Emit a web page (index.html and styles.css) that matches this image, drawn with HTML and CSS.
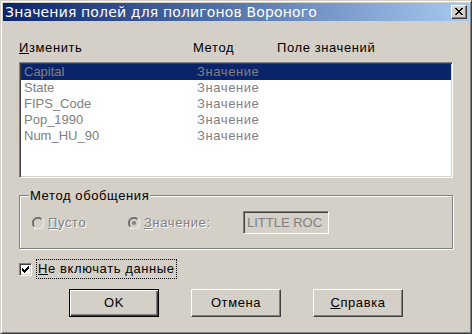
FILE: index.html
```html
<!DOCTYPE html>
<html>
<head>
<meta charset="utf-8">
<link rel="stylesheet" href="styles.css">
</head>
<body>
<div class="window">
  <div class="titlebar">
    <span class="title">Значения полей для полигонов Вороного</span>
    <span class="close">
      <svg width="8" height="7" viewBox="0 0 8 7" shape-rendering="crispEdges">
        <g fill="#000">
          <rect x="0" y="0" width="2" height="1"/><rect x="6" y="0" width="2" height="1"/>
          <rect x="1" y="1" width="2" height="1"/><rect x="5" y="1" width="2" height="1"/>
          <rect x="2" y="2" width="4" height="1"/>
          <rect x="3" y="3" width="2" height="1"/>
          <rect x="2" y="4" width="4" height="1"/>
          <rect x="1" y="5" width="2" height="1"/><rect x="5" y="5" width="2" height="1"/>
          <rect x="0" y="6" width="2" height="1"/><rect x="6" y="6" width="2" height="1"/>
        </g>
      </svg>
    </span>
  </div>
  <div class="content">
    <div class="header">
      <span class="hc1"><u>И</u>зменить</span>
      <span class="hc2">Метод</span>
      <span class="hc3">Поле значений</span>
    </div>
    <div class="list">
      <div class="row selected"><span class="lc1">Capital</span><span>Значение</span></div>
      <div class="row"><span class="lc1">State</span><span>Значение</span></div>
      <div class="row"><span class="lc1">FIPS_Code</span><span>Значение</span></div>
      <div class="row"><span class="lc1">Pop_1990</span><span>Значение</span></div>
      <div class="row"><span class="lc1">Num_HU_90</span><span>Значение</span></div>
    </div>
    <div class="group">
      <span class="legend">Метод обобщения</span>
      <div class="radio-row">
        <span class="radio r1">
          <svg class="circle" width="12" height="12" viewBox="0 0 12 12">
            <circle cx="6" cy="6" r="5.5" fill="#d4d0c8"/>
            <path d="M1.8 10.2 A5.5 5.5 0 0 1 10.2 1.8" fill="none" stroke="#808080" stroke-width="1"/>
            <path d="M10.2 1.8 A5.5 5.5 0 0 1 1.8 10.2" fill="none" stroke="#ffffff" stroke-width="1"/>
            <path d="M2.5 9.5 A4.5 4.5 0 0 1 9.5 2.5" fill="none" stroke="#404040" stroke-width="1"/>
            <path d="M9.5 2.5 A4.5 4.5 0 0 1 2.5 9.5" fill="none" stroke="#d4d0c8" stroke-width="1"/>
          </svg>
          <span class="dis"><u>П</u>усто</span>
        </span>
        <span class="radio r2">
          <svg class="circle" width="12" height="12" viewBox="0 0 12 12">
            <circle cx="6" cy="6" r="5.5" fill="#d4d0c8"/>
            <path d="M1.8 10.2 A5.5 5.5 0 0 1 10.2 1.8" fill="none" stroke="#808080" stroke-width="1"/>
            <path d="M10.2 1.8 A5.5 5.5 0 0 1 1.8 10.2" fill="none" stroke="#ffffff" stroke-width="1"/>
            <path d="M2.5 9.5 A4.5 4.5 0 0 1 9.5 2.5" fill="none" stroke="#404040" stroke-width="1"/>
            <path d="M9.5 2.5 A4.5 4.5 0 0 1 2.5 9.5" fill="none" stroke="#d4d0c8" stroke-width="1"/>
            <circle cx="6" cy="6" r="2" fill="#808080"/>
          </svg>
          <span class="dis"><u>З</u>начение:</span>
        </span>
        <span class="textbox">LITTLE ROC</span>
      </div>
    </div>
    <div class="check-row">
      <span class="checkbox">
        <svg width="7" height="7" viewBox="0 0 7 7" shape-rendering="crispEdges">
          <g fill="#000">
            <rect x="6" y="0" width="1" height="1"/>
            <rect x="5" y="1" width="2" height="1"/>
            <rect x="0" y="2" width="1" height="1"/><rect x="4" y="2" width="3" height="1"/>
            <rect x="0" y="3" width="2" height="1"/><rect x="3" y="3" width="3" height="1"/>
            <rect x="0" y="4" width="5" height="1"/>
            <rect x="1" y="5" width="3" height="1"/>
            <rect x="2" y="6" width="1" height="1"/>
          </g>
        </svg>
      </span>
      <span class="focus"><u>Н</u>е включать данные</span>
    </div>
    <div class="buttons">
      <span class="btn default">OK</span>
      <span class="btn">Отмена</span>
      <span class="btn"><u>С</u>правка</span>
    </div>
  </div>
</div>
</body>
</html>
```
FILE: styles.css
```css
html, body {
  margin: 0;
  padding: 0;
  background: #d4d0c8;
}

.window {
  width: 472px;
  height: 334px;
  box-sizing: border-box;
  background: #d4d0c8;
  border: 1px solid;
  border-color: #d4d0c8 #404040 #404040 #d4d0c8;
  box-shadow: inset 1px 1px 0 #ffffff, inset -1px -1px 0 #808080;
  padding: 2px;
  display: flex;
  flex-direction: column;
}

.titlebar {
  height: 18px;
  flex: none;
  background: linear-gradient(to right, #0a246a, #a6caf0);
  display: flex;
  align-items: center;
  justify-content: space-between;
  padding: 0 2px;
}

.title {
  color: #ffffff;
  font-family: "DejaVu Sans", sans-serif;
  font-size: 14px;
  line-height: 18px;
  letter-spacing: 0.15px;
  white-space: nowrap;
}

.close {
  width: 16px;
  height: 14px;
  box-sizing: border-box;
  background: #d4d0c8;
  border: 1px solid;
  border-color: #ffffff #404040 #404040 #ffffff;
  box-shadow: inset -1px -1px 0 #808080;
  display: flex;
  align-items: center;
  justify-content: center;
  padding: 0 1px 1px 0;
}

.close svg {
  display: block;
}

.content {
  padding: 19px 16px 0;
  font-family: "Liberation Sans", Arial, sans-serif;
  font-size: 13px;
  line-height: 16px;
  letter-spacing: 0.6px;
  color: #000000;
}

.header {
  display: flex;
  height: 16px;
  white-space: nowrap;
}

.hc1 {
  width: 174px;
}

.hc2 {
  width: 84px;
}

.list {
  margin-top: 6px;
  height: 116px;
  box-sizing: border-box;
  background: #ffffff;
  border: 1px solid;
  border-color: #808080 #ffffff #ffffff #808080;
  box-shadow: inset 1px 1px 0 #404040, inset -1px -1px 0 #d4d0c8;
  padding: 1px;
}

.row {
  display: flex;
  height: 16px;
  padding-left: 3px;
  color: #808080;
  white-space: nowrap;
}

.row.selected {
  background: #0a246a;
}

.lc1 {
  width: 173px;
  letter-spacing: 0;
}

.group {
  position: relative;
  margin-top: 17px;
  height: 54px;
  box-sizing: border-box;
  border: 1px solid #808080;
  box-shadow: inset 1px 1px 0 #ffffff, 1px 1px 0 #ffffff;
  padding: 15px 0 0 12px;
}

.legend {
  position: absolute;
  top: -8px;
  left: 9px;
  padding: 0 1px;
  background: #d4d0c8;
  color: #000000;
  white-space: nowrap;
}

.radio-row {
  display: flex;
  align-items: center;
  height: 23px;
}

.radio {
  display: flex;
  align-items: center;
  gap: 4px;
  white-space: nowrap;
}

.r1 {
  width: 96px;
}

.r2 {
  width: 115px;
}

.circle {
  display: block;
  flex: none;
}

.dis {
  color: #808080;
  text-shadow: 1px 1px 0 #ffffff;
}

.textbox {
  width: 86px;
  height: 23px;
  box-sizing: border-box;
  border: 1px solid;
  border-color: #808080 #ffffff #ffffff #808080;
  box-shadow: inset 1px 1px 0 #404040, inset -1px -1px 0 #d4d0c8;
  padding-left: 3px;
  line-height: 21px;
  letter-spacing: 0;
  color: #808080;
  white-space: nowrap;
  overflow: hidden;
}

.check-row {
  margin-top: 10px;
  display: flex;
  align-items: center;
  gap: 4px;
}

.checkbox {
  width: 13px;
  height: 13px;
  box-sizing: border-box;
  background: #ffffff;
  border: 1px solid;
  border-color: #808080 #ffffff #ffffff #808080;
  box-shadow: inset 1px 1px 0 #404040, inset -1px -1px 0 #d4d0c8;
  display: flex;
  align-items: center;
  justify-content: center;
}

.checkbox svg {
  display: block;
}

.focus {
  border: 1px dotted #000000;
  padding: 1px;
  white-space: nowrap;
}

.buttons {
  margin-top: 10px;
  display: flex;
  justify-content: center;
  gap: 32px;
}

.btn {
  width: 90px;
  height: 28px;
  box-sizing: border-box;
  background: #d4d0c8;
  border: 1px solid;
  border-color: #ffffff #404040 #404040 #ffffff;
  box-shadow: inset -1px -1px 0 #808080;
  display: flex;
  align-items: center;
  justify-content: center;
  white-space: nowrap;
}

.btn.default {
  border-color: #000000;
  box-shadow: inset 1px 1px 0 #ffffff, inset -1px -1px 0 #404040, inset -2px -2px 0 #808080;
}
```
